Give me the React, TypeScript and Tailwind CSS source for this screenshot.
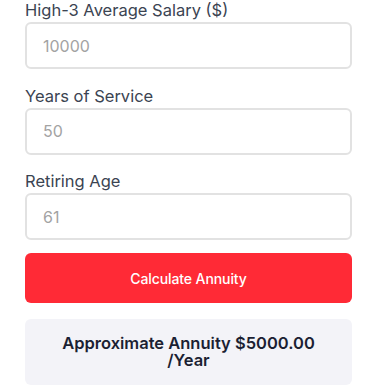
import { useState } from "react";

export default function App() {
    const [salary, setSalary] = useState("");
    const [years, setYears] = useState("");
    const [age, setAge] = useState("");

    const fields = [
        { label: "High-3 Average Salary ($)", placeholder: "10000", value: salary, set: setSalary },
        { label: "Years of Service", placeholder: "50", value: years, set: setYears },
        { label: "Retiring Age", placeholder: "61", value: age, set: setAge },
    ];

    return (
        <div className="w-[381px] h-[388px] bg-white pl-[25px] font-['Inter',sans-serif] overflow-hidden">
            <div className="w-[327px]">
                <div className="flex flex-col gap-[16.5px]">
                    {fields.map((f) => (
                        <div key={f.label} className="flex flex-col">
                            <label className="block text-[16.5px] leading-5 text-[#3b4452] mb-[2px]">{f.label}</label>
                            <input
                                className="w-full h-[47px] px-4 bg-white border-2 border-[#e2e2e2] rounded-md text-base text-[#374151] placeholder:text-[#a3a3a3] focus:outline-none"
                                placeholder={f.placeholder}
                                value={f.value}
                                onChange={(e) => f.set(e.target.value)}
                            />
                        </div>
                    ))}
                </div>

                <button className="mt-[13px] w-full h-[50px] bg-[#ff2a36] text-white rounded-md text-[14px] font-medium tracking-[-0.1px]">
                    Calculate Annuity
                </button>

                <div className="mt-4 h-[66px] bg-[#f3f3f8] rounded-md flex items-center justify-center text-center">
                    <p className="text-[16.5px] font-semibold leading-[17px] text-[#1b1f33]">
                        Approximate Annuity $5000.00
                        <br />
                        /Year
                    </p>
                </div>
            </div>
        </div>
    );
}
